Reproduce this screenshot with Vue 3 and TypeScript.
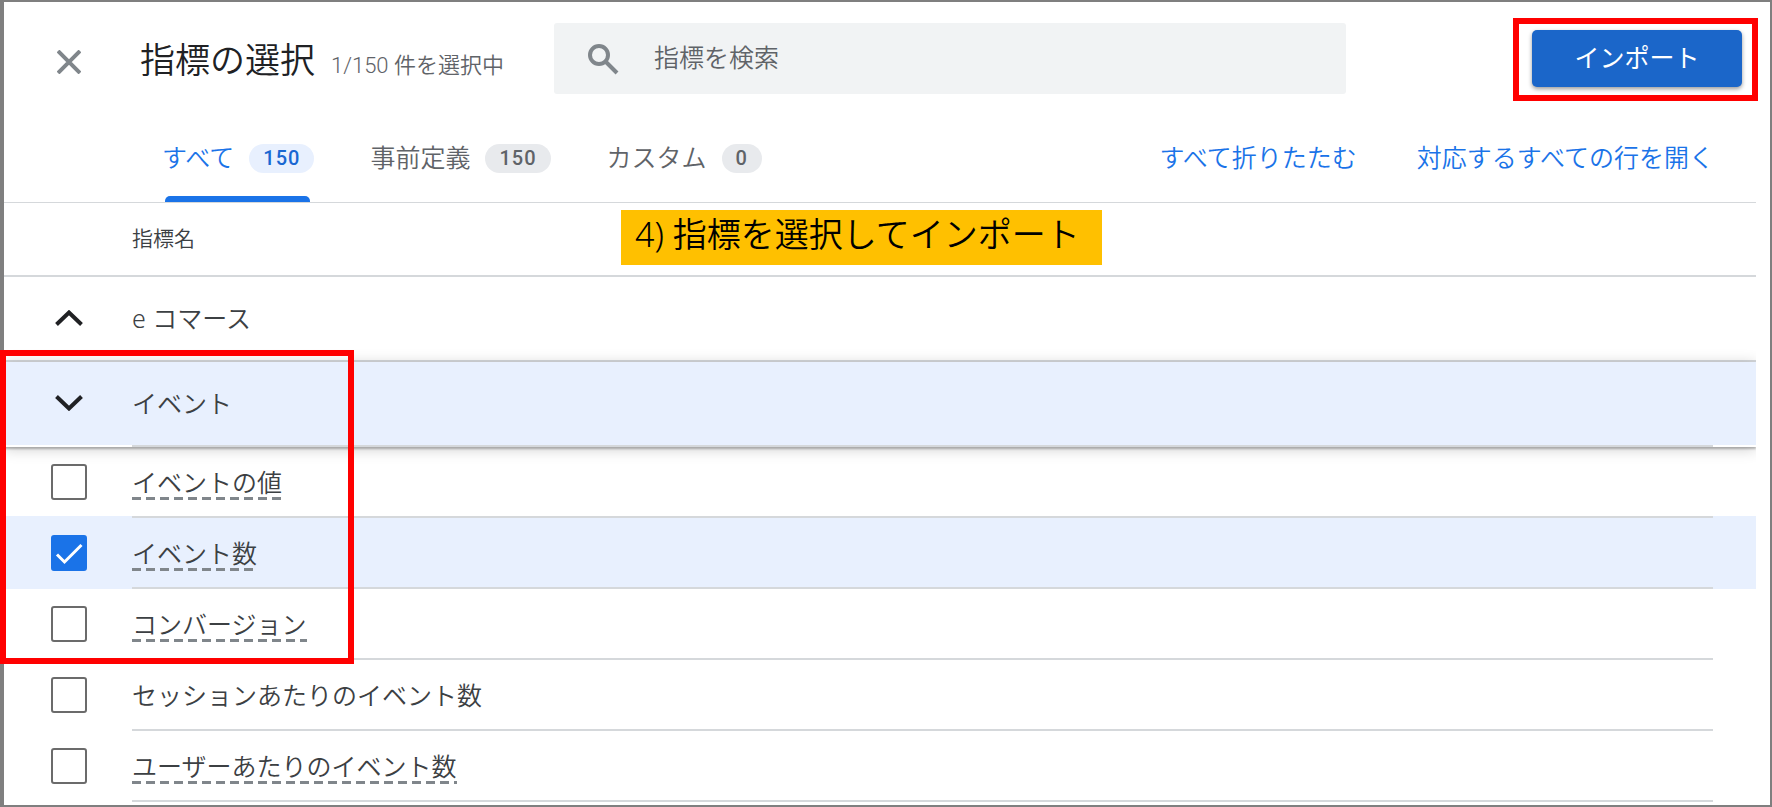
<script setup lang="ts">
import { ref } from 'vue'

interface Tab {
  id: string
  label: string
  count: number
}

interface Metric {
  id: string
  name: string
  described: boolean
  checked: boolean
}

const tabs: Tab[] = [
  { id: 'all', label: 'すべて', count: 150 },
  { id: 'predefined', label: '事前定義', count: 150 },
  { id: 'custom', label: 'カスタム', count: 0 },
]
const activeTab = ref('all')
const query = ref('')

const metrics = ref<Metric[]>([
  { id: 'event-value', name: 'イベントの値', described: true, checked: false },
  { id: 'event-count', name: 'イベント数', described: true, checked: true },
  { id: 'conversions', name: 'コンバージョン', described: true, checked: false },
  { id: 'per-session', name: 'セッションあたりのイベント数', described: false, checked: false },
  { id: 'per-user', name: 'ユーザーあたりのイベント数', described: true, checked: false },
])
</script>

<template>
  <main class="dialog">
    <header class="header">
      <button class="close" type="button" aria-label="閉じる">
        <svg viewBox="0 0 24 24" width="24" height="24" aria-hidden="true">
          <path d="M1 1 L23 23 M23 1 L1 23" />
        </svg>
      </button>
      <div class="heading">
        <h1>指標の選択</h1>
        <span class="selected">1/150 件を選択中</span>
      </div>
      <label class="search">
        <svg viewBox="0 0 32 32" width="32" height="32" aria-hidden="true">
          <circle cx="12" cy="12" r="9" />
          <path d="M18.500 18.500 L30 30" />
        </svg>
        <input v-model="query" type="search" placeholder="指標を検索" aria-label="指標を検索" />
      </label>
      <div class="import-area">
        <button class="import" type="button">インポート</button>
      </div>
    </header>

    <nav class="toolbar">
      <div class="tabs" role="tablist">
        <button
          v-for="tab in tabs"
          :key="tab.id"
          class="tab"
          :class="{ active: tab.id === activeTab }"
          type="button"
          role="tab"
          :aria-selected="tab.id === activeTab"
          @click="activeTab = tab.id"
        >
          {{ tab.label }}<span class="count">{{ tab.count }}</span>
        </button>
      </div>
      <div class="actions">
        <a href="#collapse">すべて折りたたむ</a>
        <a href="#expand">対応するすべての行を開く</a>
      </div>
    </nav>

    <section class="list">
      <table>
        <colgroup>
          <col class="col-check" />
          <col />
          <col class="col-end" />
        </colgroup>
        <thead>
          <tr>
            <td></td>
            <th scope="col">指標名</th>
            <td></td>
          </tr>
        </thead>
        <tbody>
          <tr class="group">
            <td>
              <button class="toggle" type="button" aria-label="e コマース">
                <svg viewBox="0 0 28 16" width="28" height="16" aria-hidden="true">
                  <path d="M1.500 14.500 L14 2.500 L26.500 14.500" />
                </svg>
              </button>
            </td>
            <td>e コマース</td>
            <td></td>
          </tr>
          <tr class="group open">
            <td>
              <button class="toggle" type="button" aria-label="イベント">
                <svg viewBox="0 0 28 16" width="28" height="16" aria-hidden="true">
                  <path d="M1.500 1.500 L14 13.500 L26.500 1.500" />
                </svg>
              </button>
            </td>
            <td>イベント</td>
            <td></td>
          </tr>
          <tr v-for="m in metrics" :key="m.id" class="metric" :class="{ chosen: m.checked }">
            <td>
              <span class="box">
                <input :id="m.id" v-model="m.checked" type="checkbox" />
                <svg v-if="m.checked" viewBox="0 0 36 36" aria-hidden="true">
                  <path d="M6 19.500 L13.500 27 L30.500 10" />
                </svg>
              </span>
            </td>
            <td>
              <label :for="m.id" :class="{ described: m.described }">{{ m.name }}</label>
            </td>
            <td></td>
          </tr>
        </tbody>
      </table>
      <p class="note">4) 指標を選択してインポート</p>
    </section>
    <div class="highlight" aria-hidden="true"></div>
  </main>
</template>

<style>
body {
  background: #fff;
}
</style>

<style scoped>
.dialog {
  position: relative;
  box-sizing: border-box;
  min-height: 100vh;
  border: 2px solid #7f7f7f;
  border-left-width: 4px;
  background: #fff;
  color: #3c4043;
  font-family: Roboto, 'Noto Sans CJK JP', sans-serif;
  font-size: 25px;
  font-weight: 350;
  line-height: 36px;
}

button {
  border: 0;
  padding: 0;
  background: none;
  font: inherit;
  color: inherit;
  cursor: pointer;
}

svg {
  display: block;
  fill: none;
}

.header {
  display: flex;
  align-items: center;
  height: 113px;
  padding: 0 28px 0 53px;
}

.close {
  flex: none;
  margin-top: 6px;
}

.close svg {
  stroke: #80868b;
  stroke-width: 4;
}

.heading {
  display: flex;
  flex: none;
  align-items: baseline;
  gap: 16px;
  width: 414px;
  margin-left: 59px;
  padding-top: 7px;
  white-space: nowrap;
}

h1 {
  margin: 0;
  color: #202124;
  font-size: 35px;
  font-weight: 350;
  line-height: 52px;
}

.selected {
  color: #5f6368;
  font-size: 22px;
}

.search {
  display: flex;
  flex: 1;
  align-items: center;
  gap: 35px;
  min-width: 0;
  height: 71px;
  padding-left: 33px;
  border-radius: 3px;
  background: #f1f3f4;
}

.search svg {
  flex: none;
  stroke: #80868b;
  stroke-width: 4;
}

.search input {
  flex: 1;
  min-width: 0;
  border: 0;
  padding: 0;
  outline: 0;
  background: none;
  color: #3c4043;
  font: inherit;
}

.search input::placeholder {
  color: #5f6368;
  opacity: 1;
}

.import-area {
  position: relative;
  flex: none;
  margin-left: 186px;
}

.import-area::after {
  content: '';
  position: absolute;
  inset: -12px -16px -14px -19px;
  border: 6px solid #f00;
  pointer-events: none;
}

.import {
  display: block;
  width: 210px;
  height: 57px;
  border-radius: 5px;
  background: #1b66c9;
  box-shadow: 0 2px 4px rgba(0, 0, 0, 0.4);
  color: #fff;
  font-weight: 400;
}

.toolbar {
  display: flex;
  justify-content: space-between;
  box-sizing: border-box;
  height: 88px;
  margin-right: 14px;
  padding: 0 42px 0 158px;
  border-bottom: 1px solid #d5d8db;
}

.tabs,
.actions {
  display: flex;
  align-items: center;
  gap: 56px;
  white-space: nowrap;
}

.actions {
  gap: 60px;
}

.tab {
  position: relative;
  display: flex;
  align-items: center;
  gap: 15px;
  height: 87px;
  color: #5f6368;
}

.tab.active {
  color: #1a73e8;
}

.tab.active::after {
  content: '';
  position: absolute;
  right: 4px;
  bottom: 0;
  left: 3px;
  height: 6px;
  border-radius: 5px 5px 0 0;
  background: #1a73e8;
}

.count {
  padding: 0 14px;
  border-radius: 15px;
  background: #e8eaed;
  font-size: 20px;
  font-weight: 500;
  letter-spacing: 1px;
  line-height: 29px;
}

.active .count {
  background: #e8f0fe;
  color: #1967d2;
}

.actions a {
  color: #1a73e8;
  text-decoration: none;
}

.list {
  position: relative;
  margin-right: 14px;
  overflow: hidden;
  font-family: 'Noto Sans', 'Noto Sans CJK JP', sans-serif;
}

table {
  width: 100%;
  border-spacing: 0;
  table-layout: fixed;
}

.col-check {
  width: 128px;
}

.col-end {
  width: 43px;
}

th,
td {
  box-sizing: border-box;
  height: 71px;
  padding: 0 0 2px;
  text-align: left;
  vertical-align: middle;
}

thead th,
thead td {
  height: 74px;
  border-bottom: 2px solid #d5d8db;
  font-size: 21px;
  font-weight: 350;
}

td:first-child {
  padding-left: 47px;
}

.group td {
  height: 85px;
  border-bottom: 2px solid #d5d8db;
}

.group.open {
  position: relative;
  box-shadow: 0 2px 2px rgba(0, 0, 0, 0.26), 0 2px 14px rgba(0, 0, 0, 0.2);
}

.group.open td {
  background: #e8f0fe;
}

.group.open td:first-child,
.group.open td:last-child {
  border-bottom-color: #fff;
}

.toggle {
  display: block;
  margin-left: 4px;
}

.toggle svg {
  stroke: #202124;
  stroke-width: 4;
}

.metric td:nth-child(2) {
  border-bottom: 2px solid #d5d8db;
}

.chosen td {
  background: #e8f0fe;
}

.metric:has(+ .chosen) td:not(:nth-child(2)) {
  box-shadow: inset 0 -2px #e8f0fe;
}

.box {
  position: relative;
  display: block;
  width: 36px;
  height: 36px;
}

.box input {
  display: block;
  box-sizing: border-box;
  width: 36px;
  height: 36px;
  margin: 0;
  border: 2px solid #6b6b6b;
  border-radius: 3px;
  background: #fff;
  appearance: none;
}

.box input:checked {
  border-color: #1a73e8;
  background: #1a73e8;
}

.box svg {
  position: absolute;
  inset: 0;
  stroke: #fff;
  stroke-width: 3;
  pointer-events: none;
}

.metric label {
  display: inline-block;
  vertical-align: middle;
}

.described {
  background: repeating-linear-gradient(90deg, #80868b 0 9px, transparent 9px 14px) left bottom / 100% 3px no-repeat;
}

.note {
  position: absolute;
  top: 7px;
  left: 617px;
  box-sizing: border-box;
  width: 481px;
  height: 55px;
  margin: 0;
  padding-left: 14px;
  background: #ffc000;
  color: #000;
  font-size: 34px;
  line-height: 48px;
  white-space: nowrap;
}

.highlight {
  position: absolute;
  top: 348px;
  left: -4px;
  box-sizing: border-box;
  width: 354px;
  height: 314px;
  border: 6px solid #f00;
  pointer-events: none;
}
</style>
